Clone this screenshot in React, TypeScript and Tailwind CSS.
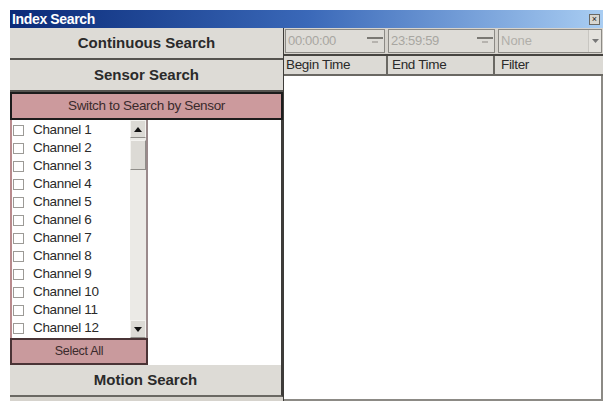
import React from 'react';

const channels = Array.from({ length: 12 }, (_, i) => `Channel ${i + 1}`);

const BigButton = ({ label }: { label: string }) => (
    <div className="h-[32px] flex items-center justify-center bg-[#dddbd6] border-b-2 border-[#55534f] text-[15px] font-bold text-[#2a2a2a]">
        {label}
    </div>
);

const Spinner = () => (
    <div className="w-[18px] h-full flex flex-col justify-center items-center gap-[2px]">
        <div className="w-[16px] h-[2px] bg-[#7a7873]" />
        <svg width="10" height="4" viewBox="0 0 10 4"><path d="M2 1 L8 1" stroke="#9a9893" strokeWidth="1.2" /></svg>
    </div>
);

const App = () => {
    return (
        <div className="w-[606px] h-[401px] bg-white pt-[10px] pl-[10px] font-['Liberation_Sans',Arial,sans-serif] overflow-hidden">
            <div className="w-[593px] h-[391px] flex flex-col bg-[#d6d3cd]">
                {/* title bar */}
                <div className="h-[18px] flex items-center justify-between bg-gradient-to-r from-[#0b2a78] via-[#3a68b8] to-[#a9cdf2] pl-[2px] pr-[3px]">
                    <span className="text-white font-bold text-[14px] leading-none tracking-tight">Index Search</span>
                    <div className="w-[11px] h-[11px] bg-[#d8d6d0] border border-[#6a6863] flex items-center justify-center text-[9px] leading-none text-[#222]">×</div>
                </div>

                <div className="flex flex-1 min-h-0">
                    {/* left column */}
                    <div className="w-[273px] flex flex-col">
                        <BigButton label="Continuous Search" />
                        <BigButton label="Sensor Search" />
                        <div className="h-[28px] flex items-center justify-center bg-[#cc9a9d] border-2 border-[#1c1c1c] text-[13.5px] tracking-tight text-[#3a2a2c]">
                            Switch to Search by Sensor
                        </div>
                        <div className="h-[218px] flex bg-white">
                            <div className="w-[138px] flex border-l-2 border-[#b98a8d]">
                                <div className="flex-1 flex flex-col pt-[1px] overflow-hidden">
                                    {channels.map((c) => (
                                        <div key={c} className="h-[18px] flex items-center gap-[9px] pl-[1px] shrink-0">
                                            <div className="w-[11px] h-[11px] border border-[#9c9a96] bg-white" />
                                            <span className="text-[13.5px] leading-none text-[#2a2a2a] tracking-tight">{c}</span>
                                        </div>
                                    ))}
                                </div>
                                <div className="w-[18px] flex flex-col bg-[#ebeae6] border-r-2 border-[#9a8a8b]">
                                    <div className="h-[18px] bg-[#dcdad5] border border-[#f4f3f0] border-b-[#8f8d89] flex items-center justify-center">
                                        <svg width="8" height="5" viewBox="0 0 8 5"><path d="M0 5 L4 0 L8 5 Z" fill="#111" /></svg>
                                    </div>
                                    <div className="h-[30px] mt-[2px] bg-[#dcdad5] border border-[#f4f3f0] border-b-[#8f8d89] border-r-[#8f8d89]" />
                                    <div className="flex-1" />
                                    <div className="h-[18px] bg-[#dcdad5] border border-[#f4f3f0] border-b-[#8f8d89] flex items-center justify-center">
                                        <svg width="8" height="5" viewBox="0 0 8 5"><path d="M0 0 L8 0 L4 5 Z" fill="#111" /></svg>
                                    </div>
                                </div>
                            </div>
                            <div className="flex-1 border-r-2 border-[#3e3c39]" />
                        </div>
                        <div className="h-[27px] flex bg-white">
                            <div className="w-[138px] flex items-center justify-center bg-[#c99a9d] border-2 border-[#4a3436] text-[12.5px] tracking-tight text-[#3a2a2c]">
                                Select All
                            </div>
                            <div className="flex-1 border-r-2 border-[#3e3c39]" />
                        </div>
                        <div className="h-[32px] flex items-center justify-center bg-[#dddbd6] border-b-2 border-[#6a6863] border-r-2 border-r-[#3e3c39] text-[15px] font-bold text-[#2a2a2a]">
                            Motion Search
                        </div>
                    </div>

                    {/* right column */}
                    <div className="flex-1 flex flex-col border-l border-[#3e3c39]">
                        <div className="h-[28px] flex items-center gap-[3px] px-[1px] bg-[#d6d3cd] border-b-2 border-[#45433f]">
                            <div className="w-[100px] h-[24px] flex items-center justify-between border border-[#8c8a85] bg-[#dedcd7]">
                                <span className="pl-[2px] text-[13px] tracking-tight text-[#a8a6a1]">00:00:00</span>
                                <Spinner />
                            </div>
                            <div className="w-[107px] h-[24px] flex items-center justify-between border border-[#8c8a85] bg-[#dedcd7]">
                                <span className="pl-[2px] text-[13px] tracking-tight text-[#a8a6a1]">23:59:59</span>
                                <Spinner />
                            </div>
                            <div className="flex-1 h-[24px] flex items-center justify-between border border-[#8c8a85] bg-[#dedcd7]">
                                <span className="pl-[2px] text-[13px] text-[#b0aea9]">None</span>
                                <div className="w-[13px] h-full flex items-center justify-center bg-[#e4e2dd] border-l border-[#c8c6c1]">
                                    <svg width="7" height="4" viewBox="0 0 7 4"><path d="M0 0 L7 0 L3.5 4 Z" fill="#777" /></svg>
                                </div>
                            </div>
                        </div>
                        <div className="h-[20px] flex bg-[#dcdad5] border-b-2 border-[#6a6863] text-[13.5px] tracking-tight text-[#2a2a2a]">
                            <div className="w-[104px] pl-[2px] flex items-center border-r-2 border-[#6a6863]">Begin Time</div>
                            <div className="w-[107px] pl-[4px] flex items-center border-r-2 border-[#6a6863]">End Time</div>
                            <div className="flex-1 pl-[6px] flex items-center">Filter</div>
                        </div>
                        <div className="flex-1 bg-white border-r-2 border-[#8c8a85] border-b-2 border-b-[#8c8a85]" />
                    </div>
                </div>
            </div>
        </div>
    );
};

export default App;
